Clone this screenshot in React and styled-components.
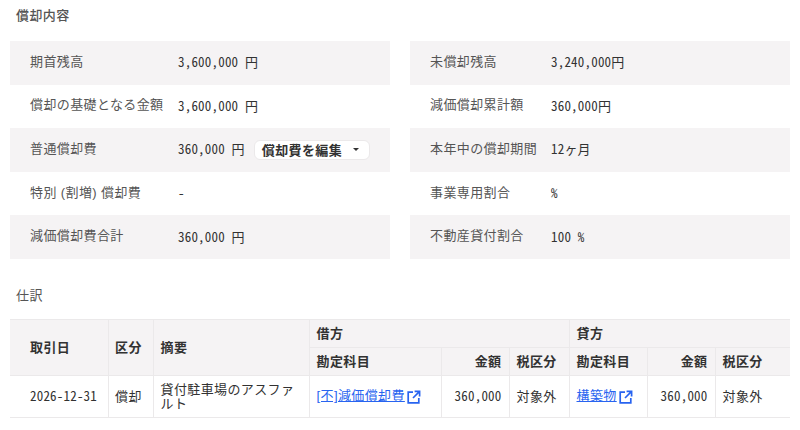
import React from 'react'
import styled, { createGlobalStyle } from 'styled-components'

const GlobalStyle = createGlobalStyle`
    html, body {
        margin: 0;
        padding: 0;
        background: #fff;
    }
    body {
        font-family: "Liberation Sans", "Noto Sans CJK JP", sans-serif;
        font-size: 13px;
        letter-spacing: 0.03em;
        color: #323232;
    }
`;

const leftRows = [
    { label: '期首残高', value: '3,600,000 円' },
    { label: '償却の基礎となる金額', value: '3,600,000 円' },
    { label: '普通償却費', value: '360,000 円', edit: true },
    { label: '特別 (割増) 償却費', value: '-' },
    { label: '減価償却費合計', value: '360,000 円' },
]

const rightRows = [
    { label: '未償却残高', value: '3,240,000円' },
    { label: '減価償却累計額', value: '360,000円' },
    { label: '本年中の償却期間', value: '12ヶ月' },
    { label: '事業専用割合', value: '%' },
    { label: '不動産貸付割合', value: '100 %' },
]

function InfoList({ rows, labelWidth }) {
    return (
        <List>
            {rows.map(row => (
                <Row key={row.label} $labelWidth={labelWidth}>
                    <Label>{row.label}</Label>
                    <Value>
                        <ValueNum>{row.value}</ValueNum>
                        {row.edit && (
                            <EditButton>
                                償却費を編集
                                <Caret />
                            </EditButton>
                        )}
                    </Value>
                </Row>
            ))}
        </List>
    )
}

function ExternalIcon() {
    return (
        <LinkIcon viewBox="0 0 14 14">
            <path d="M6 2.2H1.2v10.6h10.6V8" fill="none" stroke="currentColor" strokeWidth="1.7" />
            <path d="M7.6 1.4h5v5M12.3 1.7L6 8" fill="none" stroke="currentColor" strokeWidth="1.7" />
        </LinkIcon>
    )
}

export default function App() {
    return (
        <Page>
            <GlobalStyle />
            <Heading>償却内容</Heading>
            <Columns>
                <InfoList rows={leftRows} labelWidth={148} />
                <InfoList rows={rightRows} labelWidth={121} />
            </Columns>
            <JournalHeading>仕訳</JournalHeading>
            <Table>
                <colgroup>
                    <col width="98" />
                    <col width="45.5" />
                    <col width="156" />
                    <col width="132" />
                    <col width="68" />
                    <col width="60" />
                    <col width="78" />
                    <col width="68" />
                    <col width="74.5" />
                </colgroup>
                <thead>
                    <tr>
                        <Th rowSpan={2} $indent>取引日</Th>
                        <Th rowSpan={2}>区分</Th>
                        <Th rowSpan={2}>摘要</Th>
                        <Th colSpan={3}>借方</Th>
                        <Th colSpan={3}>貸方</Th>
                    </tr>
                    <tr>
                        <Th>勘定科目</Th>
                        <Th $right>金額</Th>
                        <Th>税区分</Th>
                        <Th>勘定科目</Th>
                        <Th $right>金額</Th>
                        <Th>税区分</Th>
                    </tr>
                </thead>
                <tbody>
                    <tr>
                        <Td $indent><Num>2026-12-31</Num></Td>
                        <Td>償却</Td>
                        <Td>貸付駐車場のアスファルト</Td>
                        <Td><AccountLink>[不]減価償却費</AccountLink><ExternalIcon /></Td>
                        <Td $right><Num>360,000</Num></Td>
                        <Td>対象外</Td>
                        <Td><AccountLink>構築物</AccountLink><ExternalIcon /></Td>
                        <Td $right><Num>360,000</Num></Td>
                        <Td>対象外</Td>
                    </tr>
                </tbody>
            </Table>
        </Page>
    )
}

const Page = styled.div`
    width: 800px;
    height: 430px;
    box-sizing: border-box;
    padding: 0 10px;
    overflow: hidden;
`;

const Heading = styled.h2`
    margin: 0;
    padding: 7px 6px 0;
    height: 41px;
    box-sizing: border-box;
    font-size: 13px;
    line-height: 18px;
    font-weight: 500;
    color: #555;
`;

const JournalHeading = styled(Heading)`
    padding-top: 28px;
    height: 60.5px;
    font-weight: 400;
`;

const Columns = styled.div`
    display: grid;
    grid-template-columns: 380px 380px;
    gap: 20px;
`;

const List = styled.div`
    display: flex;
    flex-direction: column;
`;

const Row = styled.div`
    display: grid;
    grid-template-columns: ${props => props.$labelWidth}px 1fr;
    align-items: center;
    height: 43.6px;
    padding-left: 20px;
    &:nth-child(odd) {
        background: #f5f3f4;
    }
`;

const Label = styled.div`
    color: #555;
    white-space: nowrap;
    padding-bottom: 5px;
`;

const Value = styled.div`
    display: flex;
    align-items: center;
    gap: 9px;
    color: #323232;
`;

const Num = styled.span`
    font-family: "Noto Sans Mono CJK JP", "Noto Sans CJK JP", monospace;
    letter-spacing: 0.2px;
    white-space: pre;
`;

const ValueNum = styled(Num)`
    margin-bottom: 2px;
`;

const EditButton = styled.button`
    display: flex;
    align-items: center;
    justify-content: space-between;
    width: 116px;
    height: 20px;
    padding: 0 7px;
    box-sizing: border-box;
    border: 1px solid #ebe9ea;
    border-radius: 6px;
    background: #fff;
    font: inherit;
    font-weight: 700;
    letter-spacing: inherit;
    color: #323232;
`;

const Caret = styled.span`
    width: 0;
    height: 0;
    border-left: 3px solid transparent;
    border-right: 3px solid transparent;
    border-top: 3px solid #323232;
    margin-right: 3px;
`;

const Table = styled.table`
    width: 780px;
    border-collapse: collapse;
    table-layout: fixed;
`;

const Th = styled.th`
    height: 28px;
    padding: 0 7.5px 0 ${props => (props.$indent ? '20px' : '6.5px')};
    box-sizing: border-box;
    background: #f5f3f4;
    border: 1px solid #ebe9ea;
    text-align: ${props => (props.$right ? 'right' : 'left')};
    font-weight: 700;
    line-height: 16px;
    color: #323232;
    &:first-child {
        border-left: none;
    }
    &:last-child {
        border-right: none;
    }
`;

const Td = styled.td`
    height: 41.3px;
    padding: 0 7.5px 0 ${props => (props.$indent ? '20px' : '6.5px')};
    box-sizing: border-box;
    border: 1px solid #ebe9ea;
    border-top: none;
    text-align: ${props => (props.$right ? 'right' : 'left')};
    line-height: 14px;
    color: #323232;
    &:first-child {
        border-left: none;
    }
    &:last-child {
        border-right: none;
    }
`;

const AccountLink = styled.a`
    color: #2864f0;
    text-decoration: underline;
`;

const LinkIcon = styled.svg`
    width: 14px;
    height: 14px;
    margin-left: 2px;
    vertical-align: -4px;
    color: #2864f0;
`;
